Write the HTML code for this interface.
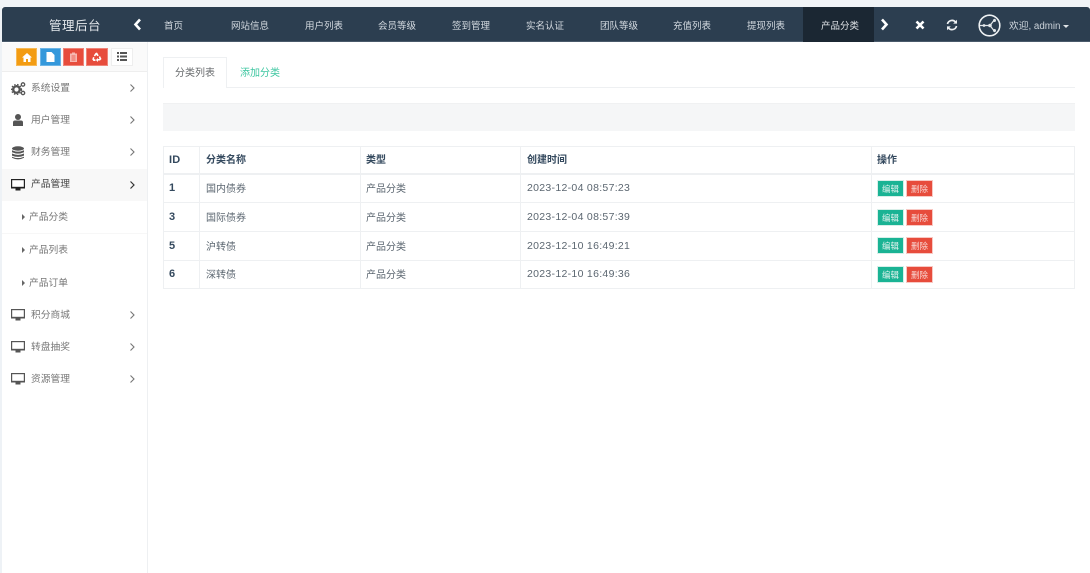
<!DOCTYPE html>
<html><head><meta charset="utf-8">
<style>
*{box-sizing:border-box;margin:0;padding:0}
html,body{width:1090px;height:573px;overflow:hidden;background:#fff}
body{position:relative;font-family:"Liberation Sans","Noto Sans CJK SC",sans-serif;color:#676a6c}
.a{position:absolute;white-space:nowrap}
.nav{top:9px;height:35px;line-height:36px;font-size:9.5px;color:#d5dbe1}
.m{left:31px;font-size:9.75px;color:#777;height:14px;line-height:14px}
.s{left:29px;font-size:9.75px;color:#777;height:14px;line-height:14px}
.g{left:11px;width:15px;height:15px}
.c{left:128px;width:8px;height:10px}
.tri{left:22px;width:0;height:0;border-left:3px solid #666;border-top:3px solid transparent;border-bottom:3px solid transparent}
.h{height:1px;background:#eef0f2}
.v{width:1px;background:#eef0f2}
.td{font-size:10px;color:#5b6670;height:14px;line-height:14px}
.n{font-size:10.5px;letter-spacing:.3px}
.b{font-weight:bold;color:#34495e}
.i{font-size:11px;letter-spacing:.2px}
.btn{width:27px;height:17px;line-height:17px;text-align:center;font-size:8.5px;color:#e4f3ef;border:1px solid #d8efe9;background:#1ab394}
.del{background:#e74c3c;border-color:#f8c9c4;color:#f8d5d1}
</style></head><body>
<div class="a" style="left:0;top:0;width:1090px;height:7px;background:#f1f4f7"></div>
<div class="a" style="left:0;top:7px;width:2px;height:566px;background:#eef2f6"></div>
<div class="a" style="left:2px;top:7px;width:1088px;height:35px;background:#2c3e50;border-radius:3px 3px 0 0;border-bottom:1px solid #4a5a6b"></div>
<div class="a" style="left:49px;top:17px;font-size:12.5px;line-height:18px;color:#e3e7eb;letter-spacing:.5px">管理后台</div>
<svg class="a" style="left:133px;top:18px" width="9" height="13" viewBox="0 0 9 13"><path d="M7 1.5 2.5 6.5 7 11.5" fill="none" stroke="#fff" stroke-width="2.6"/></svg>
<div class="a nav" style="left:164px">首页</div>
<div class="a nav" style="left:231px">网站信息</div>
<div class="a nav" style="left:305px">用户列表</div>
<div class="a nav" style="left:378px">会员等级</div>
<div class="a nav" style="left:452px">签到管理</div>
<div class="a nav" style="left:526px">实名认证</div>
<div class="a nav" style="left:600px">团队等级</div>
<div class="a nav" style="left:673px">充值列表</div>
<div class="a nav" style="left:747px">提现列表</div>
<div class="a" style="left:803px;top:7px;width:71px;height:35px;background:#1b2733"></div>
<div class="a nav" style="left:821px;color:#dfe3e7">产品分类</div>
<svg class="a" style="left:880px;top:18px" width="9" height="13" viewBox="0 0 9 13"><path d="M2 1.5 6.5 6.5 2 11.5" fill="none" stroke="#fff" stroke-width="2.6"/></svg>
<svg class="a" style="left:915px;top:20px" width="10" height="10" viewBox="0 0 10 10"><path d="M1.5 1.5 8.5 8.5M8.5 1.5 1.5 8.5" stroke="#fff" stroke-width="2.6"/></svg>
<svg class="a" style="left:946px;top:19px" width="12" height="12" viewBox="0 0 12 12"><path d="M1.5 5A4.6 4.6 0 0 1 9.5 3M10.5 7A4.6 4.6 0 0 1 2.5 9" fill="none" stroke="#eef1f3" stroke-width="1.7"/><path d="M11 .8V4.6H7.2zM1 11.2V7.4H4.8z" fill="#eef1f3"/></svg>
<svg class="a" style="left:978px;top:14px" width="23" height="23" viewBox="0 0 23 23"><circle cx="11.5" cy="11.5" r="10.3" fill="#2c3e50" stroke="#eef1f3" stroke-width="1.6"/><path d="M2 11.500H12L17 5M12 11.500 17 18" fill="none" stroke="#e3e7ea" stroke-width="1.2"/><circle cx="12" cy="11.500" r="1.800" fill="#e3e7ea"/><circle cx="6" cy="11.500" r="1.400" fill="#e3e7ea"/><circle cx="16.500" cy="6.500" r="1.500" fill="#e3e7ea"/><circle cx="16.500" cy="16.500" r="1.500" fill="#e3e7ea"/></svg>
<div class="a" style="left:1009px;top:20px;font-size:9.75px;line-height:14px;color:#ccd3da">欢迎, admin</div>
<div class="a" style="left:1063px;top:25px;border-top:3px solid #dfe3e7;border-left:3px solid transparent;border-right:3px solid transparent"></div>

<!-- sidebar -->
<div class="a" style="left:147px;top:42px;width:1px;height:531px;background:#eef0f2"></div>
<div class="a" style="left:2px;top:43px;width:145px;height:29px;background:#fafafa;border-bottom:1px solid #eee"></div>
<div class="a" style="left:16px;top:48px;width:21px;height:18px;background:#f39c12;border:1px solid #f7b955"></div>
<svg class="a" style="left:22px;top:53px" width="10" height="9" viewBox="0 0 10 9"><path d="M5 0 10 4.500H8.500V9H6V6H4V9H1.500V4.500H0z" fill="#fff"/></svg>
<div class="a" style="left:40px;top:48px;width:21px;height:18px;background:#3498db;border:1px solid #6db5e6"></div>
<svg class="a" style="left:46px;top:52px" width="9" height="10" viewBox="0 0 9 10"><path d="M.5 0H5.500L8.500 3V10H.5z" fill="#fff"/></svg>
<div class="a" style="left:63px;top:48px;width:21px;height:18px;background:#e74c3c;border:1px solid #ef8479"></div>
<svg class="a" style="left:70px;top:52px" width="7" height="10" viewBox="0 0 7 10"><path d="M0 1.500H2V.5H5V1.500H7V10H0z" fill="#f7b7b0"/><path d="M1.500 4H5.500M1.500 6H5.500M1.500 8H5.500" stroke="#e74c3c" stroke-width=".7"/></svg>
<div class="a" style="left:86px;top:48px;width:22px;height:18px;background:#e74c3c;border:1px solid #ef8479"></div>
<svg class="a" style="left:92px;top:52px" width="10" height="10" viewBox="0 0 10 10"><path d="M3.500 1 5 .5 6.800 3.500 5.200 4.300 4.300 2.800 3 4.500 1.800 3.500zM8 4 9.500 7 8 8.500H6V10L3.800 8 6 6V7H7.500L6.800 5zM1 5 2.500 5.500 2 7 3.500 7.500V9H1.500L.3 7.500z" fill="#fff"/></svg>
<div class="a" style="left:111px;top:48px;width:22px;height:18px;background:#fff;border:1px solid #eee"></div>
<svg class="a" style="left:117px;top:52px" width="10" height="9" viewBox="0 0 10 9"><path d="M0 0H2V2H0zM3 0H10V2H3zM0 3.500H2V5.500H0zM3 3.500H10V5.500H3zM0 7H2V9H0zM3 7H10V9H3z" fill="#555"/></svg>

<svg class="a g" style="top:81px" viewBox="0 0 15 15"><circle cx="5.500" cy="8.500" r="3.300" fill="none" stroke="#555" stroke-width="2.400"/><circle cx="12" cy="3.500" r="1.700" fill="none" stroke="#555" stroke-width="1.300"/><circle cx="12" cy="12" r="1.700" fill="none" stroke="#555" stroke-width="1.300"/><circle cx="5.500" cy="8.500" r="5" fill="none" stroke="#555" stroke-width="1.200" stroke-dasharray="1.500 1.500"/></svg>
<div class="a m" style="top:82px">系统设置</div>
<svg class="a" style="left:13px;top:113px" width="10" height="14" viewBox="0 0 10 14"><circle cx="5" cy="4" r="3" fill="#555"/><path d="M0 13V9.500Q0 7.500 2 7.500H8Q10 7.500 10 9.500V13z" fill="#555"/></svg>
<div class="a m" style="top:114px">用户管理</div>
<svg class="a" style="left:12px;top:146px" width="12" height="14" viewBox="0 0 12 14"><ellipse cx="6" cy="2.500" rx="6" ry="2.200" fill="#555"/><path d="M0 4.200Q6 7 12 4.200V6.300Q6 9 0 6.300zM0 7.500Q6 10.200 12 7.500V9.600Q6 12.200 0 9.600zM0 10.700Q6 13.400 12 10.700V11.700Q6 15 0 11.700z" fill="#555"/></svg>
<div class="a m" style="top:146px">财务管理</div>
<div class="a" style="left:2px;top:169px;width:145px;height:32px;background:#f8f8f8"></div>
<svg class="a" style="left:11px;top:179px" width="14" height="12" viewBox="0 0 14 12"><path d="M0 0H14V9.500H9.500V11.500H4.500V9.500H0z" fill="#222"/><rect x="1.200" y="1.200" width="11.600" height="6.600" fill="#fff"/></svg>
<div class="a m" style="top:178px;color:#444">产品管理</div>
<div class="a tri" style="top:214px"></div><div class="a s" style="top:211px">产品分类</div>
<div class="a h" style="left:2px;top:233px;width:145px;background:#f7f7f7"></div>
<div class="a tri" style="top:247px"></div><div class="a s" style="top:244px">产品列表</div>
<div class="a tri" style="top:280px"></div><div class="a s" style="top:277px">产品订单</div>
<svg class="a" style="left:11px;top:309px" width="14" height="12" viewBox="0 0 14 12"><path d="M0 0H14V9.500H9.500V11.500H4.500V9.500H0z" fill="#555"/><rect x="1.200" y="1.200" width="11.600" height="6.600" fill="#fff"/></svg>
<div class="a m" style="top:309px">积分商城</div>
<svg class="a" style="left:11px;top:341px" width="14" height="12" viewBox="0 0 14 12"><path d="M0 0H14V9.500H9.500V11.500H4.500V9.500H0z" fill="#555"/><rect x="1.200" y="1.200" width="11.600" height="6.600" fill="#fff"/></svg>
<div class="a m" style="top:341px">转盘抽奖</div>
<svg class="a" style="left:11px;top:373px" width="14" height="12" viewBox="0 0 14 12"><path d="M0 0H14V9.500H9.500V11.500H4.500V9.500H0z" fill="#555"/><rect x="1.200" y="1.200" width="11.600" height="6.600" fill="#fff"/></svg>
<div class="a m" style="top:373px">资源管理</div>
<svg class="a c" style="top:83px" viewBox="0 0 8 10"><path d="M2.500 1.500 6 5 2.500 8.500" fill="none" stroke="#777" stroke-width="1.100"/></svg>
<svg class="a c" style="top:115px" viewBox="0 0 8 10"><path d="M2.500 1.500 6 5 2.500 8.500" fill="none" stroke="#777" stroke-width="1.100"/></svg>
<svg class="a c" style="top:147px" viewBox="0 0 8 10"><path d="M2.500 1.500 6 5 2.500 8.500" fill="none" stroke="#777" stroke-width="1.100"/></svg>
<svg class="a c" style="top:180px" viewBox="0 0 8 10"><path d="M2.500 1.500 6 5 2.500 8.500" fill="none" stroke="#333" stroke-width="1.200"/></svg>
<svg class="a c" style="top:310px" viewBox="0 0 8 10"><path d="M2.500 1.500 6 5 2.500 8.500" fill="none" stroke="#777" stroke-width="1.100"/></svg>
<svg class="a c" style="top:342px" viewBox="0 0 8 10"><path d="M2.500 1.500 6 5 2.500 8.500" fill="none" stroke="#777" stroke-width="1.100"/></svg>
<svg class="a c" style="top:374px" viewBox="0 0 8 10"><path d="M2.500 1.500 6 5 2.500 8.500" fill="none" stroke="#777" stroke-width="1.100"/></svg>

<!-- tabs -->
<div class="a h" style="left:163px;top:87px;width:912px"></div>
<div class="a" style="left:163px;top:57px;width:64px;height:31px;background:#fff;border:1px solid #eef0f2;border-bottom:0"></div>
<div class="a" style="left:175px;top:67px;font-size:10px;line-height:14px;color:#676a6c">分类列表</div>
<div class="a" style="left:240px;top:67px;font-size:10px;line-height:14px;color:#3cc6a0">添加分类</div>
<div class="a" style="left:163px;top:103px;width:912px;height:28px;background:#f5f6f7;border-top:1px solid #f0f1f2"></div>

<!-- table -->
<div class="a" style="left:163px;top:146px;width:912px;height:143px;border:1px solid #eef0f2"></div>
<div class="a h" style="left:163px;top:173px;width:912px;height:2px"></div>
<div class="a h" style="left:163px;top:202px;width:912px"></div>
<div class="a h" style="left:163px;top:231px;width:912px"></div>
<div class="a h" style="left:163px;top:260px;width:912px"></div>
<div class="a v" style="left:199px;top:146px;height:143px"></div>
<div class="a v" style="left:360px;top:146px;height:143px"></div>
<div class="a v" style="left:520px;top:146px;height:143px"></div>
<div class="a v" style="left:871px;top:146px;height:143px"></div>

<div class="a td b i" style="left:169px;top:153px">ID</div>
<div class="a td b" style="left:206px;top:154px">分类名称</div>
<div class="a td b" style="left:366px;top:154px">类型</div>
<div class="a td b" style="left:527px;top:154px">创建时间</div>
<div class="a td b" style="left:877px;top:154px">操作</div>

<div class="a td b i" style="left:169px;top:181px">1</div><div class="a td" style="left:206px;top:183px">国内债券</div><div class="a td" style="left:366px;top:183px">产品分类</div><div class="a td n" style="left:527px;top:181px">2023-12-04 08:57:23</div>
<div class="a td b i" style="left:169px;top:210px">3</div><div class="a td" style="left:206px;top:212px">国际债券</div><div class="a td" style="left:366px;top:212px">产品分类</div><div class="a td n" style="left:527px;top:210px">2023-12-04 08:57:39</div>
<div class="a td b i" style="left:169px;top:239px">5</div><div class="a td" style="left:206px;top:241px">沪转债</div><div class="a td" style="left:366px;top:241px">产品分类</div><div class="a td n" style="left:527px;top:239px">2023-12-10 16:49:21</div>
<div class="a td b i" style="left:169px;top:267px">6</div><div class="a td" style="left:206px;top:269px">深转债</div><div class="a td" style="left:366px;top:269px">产品分类</div><div class="a td n" style="left:527px;top:267px">2023-12-10 16:49:36</div>

<div class="a btn" style="left:877px;top:180px">编辑</div><div class="a btn del" style="left:906px;top:180px">删除</div>
<div class="a btn" style="left:877px;top:209px">编辑</div><div class="a btn del" style="left:906px;top:209px">删除</div>
<div class="a btn" style="left:877px;top:237px">编辑</div><div class="a btn del" style="left:906px;top:237px">删除</div>
<div class="a btn" style="left:877px;top:266px">编辑</div><div class="a btn del" style="left:906px;top:266px">删除</div>
</body></html>
